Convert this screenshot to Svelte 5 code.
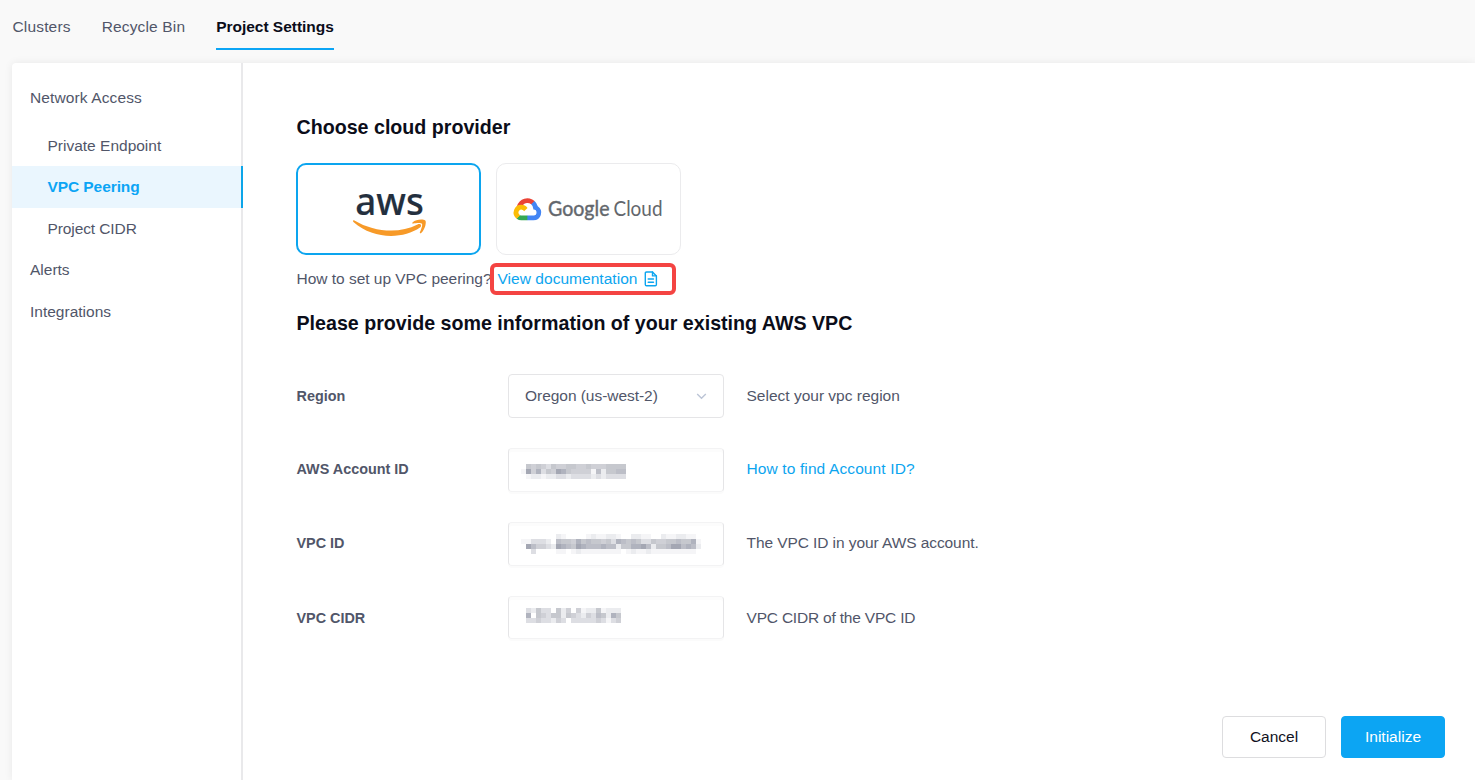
<script>
  const tabs = ['Clusters', 'Recycle Bin', 'Project Settings'];
  const shades = ['transparent', '#f5f5f7', '#ebecef', '#dddee3', '#cfd0d6', '#c6c8ce', '#bcbec7', '#b0b3be', '#a4a7b3', '#989cab'];
  const account = {
    top: 14,
    rows: ['054543544554454445555', '184735487544441625566', '012212233233332323333']
  };
  const vpc = {
    top: 10,
    rows: [
      '000000021000012112210022110021122110',
      '113332065547565545376565335445565571',
      '086443287658766676625577862556886762',
      '003000011012111111110121121111111110'
    ]
  };
  const cidr = {
    top: 11,
    rows: ['03253305240412251222', '07054355254324365275', '03343324303333343134']
  };
</script>

{#snippet masked(m)}
  <svg class="mask" width="190" height="41" shape-rendering="crispEdges">
    {#each m.rows as row, y}
      {#each row.split('') as c, x}
        {#if c !== '0'}
          <rect x={x * 5} y={m.top + y * 5} width="5" height="5" fill={shades[+c]} />
        {/if}
      {/each}
    {/each}
  </svg>
{/snippet}

<div class="page">
  <nav class="tabs">
    {#each tabs as tab, i}
      <span class="tab" class:active={i === 2}>{tab}</span>
    {/each}
  </nav>

  <div class="panel">
    <aside>
      <div class="item first">Network Access</div>
      <div class="item sub">Private Endpoint</div>
      <div class="item sub active">VPC Peering</div>
      <div class="item sub cidr">Project CIDR</div>
      <div class="item">Alerts</div>
      <div class="item">Integrations</div>
    </aside>

    <main>
      <h2>Choose cloud provider</h2>
      <div class="providers">
        <div class="card selected">
          <svg width="184" height="92" viewBox="0 0 184 92">
            <text x="59.300" y="51.800" font-family="Noto Sans" font-weight="500" font-size="38.500" textLength="68.500" lengthAdjust="spacingAndGlyphs" fill="#232f3e" stroke="#232f3e" stroke-width=".2">aws</text>
            <path d="M58.4 57.4C78 69 103 71 121.5 61.5C124.5 60 126.5 62.5 124 64.6C107 76.5 77 76.5 57.7 59.3C56.4 58 57 56.7 58.4 57.4Z" fill="#f79a28" />
            <path d="M116.5 59.4C120 56.2 127 56 129.3 57.4C130.6 58.4 129.5 66 125.2 70C124.4 70.7 123.5 70.2 123.9 69.3C125 66.8 126.8 62 126 60.7C125 59.5 120 60 117.3 60.4C116.2 60.5 115.8 60 116.5 59.4Z" fill="#f79a28" />
          </svg>
        </div>
        <div class="card">
          <svg width="184" height="92" viewBox="0 0 184 92">
            <g transform="translate(17.3 34.9) scale(.1085)">
              <path fill="#ea4335" d="M161 58.500L169 58.800L191 36.900L192 27.600A99.300 99.300 0 0 0 30.500 76C33 75 38 75.400 38 75.400L82 68.100S84.300 64.400 85.400 64.600A55 55 0 0 1 161 58.500Z" transform="translate(3.500 0)" />
              <path fill="#4285f4" d="M225.400 76A99.200 99.200 0 0 0 195.500 27.900L164.600 58.800A55 55 0 0 1 184.700 102.300V107.800A27.500 27.500 0 1 1 184.700 162.700H129.700L124.200 168.200V201.200L129.700 206.700H184.700A71.500 71.500 0 0 0 225.400 76Z" />
              <path fill="#34a853" d="M74.600 206.700H129.600V162.700H74.600A27.300 27.300 0 0 1 63.300 160.200L55.400 162.600L33.300 184.500L31.300 192.200A71.200 71.200 0 0 0 74.600 206.700Z" />
              <path fill="#fbbc05" d="M74.600 63.900A71.500 71.500 0 0 0 31.300 192.200L63.200 160.300A27.500 27.500 0 1 1 99.500 124L131.400 92.100A71.400 71.400 0 0 0 74.600 63.900Z" />
            </g>
            <text x="52" y="53.300" font-family="Lato" font-size="20.500" textLength="61.500" lengthAdjust="spacingAndGlyphs" fill="#63676c" stroke="#63676c" stroke-width=".4">Google</text>
            <text x="117.500" y="53.300" font-family="Lato" font-size="20.500" textLength="49" lengthAdjust="spacingAndGlyphs" fill="#63676c">Cloud</text>
          </svg>
        </div>
      </div>

      <div class="help">
        <span>How to set up VPC peering?</span>
        <span class="doc">
          View documentation
          <svg width="14" height="16" viewBox="0 0 14 16" fill="none" stroke="#0ca5ef" stroke-width="1.400" stroke-linejoin="round" stroke-linecap="round">
            <path d="M8.500 1H2.500Q1.300 1 1.300 2.200V13.500Q1.300 14.700 2.500 14.700H11.200Q12.400 14.700 12.400 13.500V4.900Z" />
            <path d="M8.500 1V4.900H12.400M4.200 8H9.500M4.200 11.200H9.500" />
          </svg>
        </span>
      </div>

      <h2 class="info">Please provide some information of your existing AWS VPC</h2>

      <div class="form">
        <div class="label">Region</div>
        <div class="field select">
          <span>Oregon (us-west-2)</span>
          <svg width="11" height="7" viewBox="0 0 11 7" fill="none" stroke="#bcc5d6" stroke-width="1.400"><path d="M1.200 1L5.500 5.300L9.800 1" /></svg>
        </div>
        <span class="note">Select your vpc region</span>

        <div class="label up">AWS Account ID</div>
        <div class="field soft">{@render masked(account)}</div>
        <span class="note link up">How to find Account ID?</span>

        <div class="label up">VPC ID</div>
        <div class="field soft">{@render masked(vpc)}</div>
        <span class="note up tight">The VPC ID in your AWS account.</span>

        <div class="label">VPC CIDR</div>
        <div class="field soft last">{@render masked(cidr)}</div>
        <span class="note tighter">VPC CIDR of the VPC ID</span>
      </div>

      <div class="actions">
        <button>Cancel</button>
        <button class="primary">Initialize</button>
      </div>
    </main>
  </div>
</div>

<style>
  :global(body) { margin: 0; overflow: hidden; }
  .page {
    box-sizing: border-box;
    width: 1475px;
    height: 780px;
    overflow: hidden;
    background: #f9f9f9;
    color: #515669;
    font: 15.5px/20px "Liberation Sans", Arial, sans-serif;
    display: flex;
    flex-direction: column;
  }
  .tabs { height: 63px; flex: none; display: flex; gap: 31px; padding-left: 12.5px; box-sizing: border-box; align-items: flex-start; }
  .tab { padding-top: 17px; height: 31px; border-bottom: 2px solid transparent; white-space: nowrap; letter-spacing: .16px; }
  .tab.active { color: #0b0d19; font-weight: 700; border-color: #0ca5f5; letter-spacing: -.03px; }
  .panel { flex: 1; margin-left: 12px; display: flex; background: #fff; border-radius: 4px 0 0 0; box-shadow: 0 0 8px rgba(0, 0, 0, .07); }
  aside { width: 231px; box-sizing: border-box; border-right: 2px solid #e9e9eb; padding-top: 14px; flex: none; }
  .item { height: 41.5px; line-height: 41.5px; padding-left: 18px; }
  .item.first { margin-bottom: 6px; letter-spacing: .12px; }
  .item.sub { padding-left: 35.5px; }
  .item.cidr { letter-spacing: -.1px; }
  .item.active { background: #eaf6fe; color: #0ca5f5; font-weight: 700; margin-right: -2px; border-right: 2px solid #0ca5e9; letter-spacing: -.08px; }
  main { flex: 1; padding: 52px 30px 22px 53.5px; display: flex; flex-direction: column; }
  h2 { margin: 0; font-size: 19.65px; line-height: 24px; color: #0b0d19; font-weight: 700; }
  .providers { display: flex; gap: 15px; margin: 24px 0 0 -.5px; }
  .card { width: 185px; height: 92px; box-sizing: border-box; border: 1px solid #ebebed; border-radius: 10px; display: flex; overflow: hidden; }
  .card svg { margin: -1px; flex: none; }
  .card.selected { border: 2px solid #0ca5ef; }
  .card.selected svg { margin: -2px; }
  .help { display: flex; align-items: center; height: 31px; margin-top: 8px; }
  .help > span:first-child { width: 193px; white-space: nowrap; letter-spacing: -.02px; }
  .doc { width: 186px; height: 32px; box-sizing: border-box; border: 4px solid #f44442; border-radius: 6px; color: #0ca5ef; display: flex; align-items: center; gap: 6.5px; padding-left: 4px; white-space: nowrap; letter-spacing: .04px; }
  .info { margin-top: 17px; }
  .form { margin-top: 39px; display: grid; grid-template-columns: 211.5px 216px 1fr; grid-template-rows: 44px 44px 44px 44px; row-gap: 30px; align-items: center; }
  .label { font-weight: 700; font-size: 14.4px; }
  .up { padding-bottom: 2px; }
  .field { height: 44px; box-sizing: border-box; border: 1px solid #e5e5e7; border-radius: 4px; display: flex; align-items: center; }
  .field.soft { border-top-color: #f3f3f4; border-bottom-color: #f3f3f4; box-shadow: inset 0 3px #fcfcfc, 0 2px #fbfbfb; }
  .field.last { margin-top: -1px; height: 43px; }
  .select { justify-content: space-between; padding: 0 16px; letter-spacing: -.04px; }
  .mask { margin-left: 12px; }
  .note { padding-left: 22.5px; }
  .tight { letter-spacing: -.08px; }
  .tighter { letter-spacing: -.2px; }
  .link { color: #0ca5ef; letter-spacing: .12px; }
  .actions { margin-top: auto; display: flex; justify-content: flex-end; gap: 15px; }
  button { width: 104px; height: 42px; border: 1px solid #dddddf; border-radius: 4px; background: #fff; color: #10121e; font: inherit; padding: 0; }
  .primary { background: #0ca5f3; border-color: #0ca5f3; color: #fff; }
</style>
